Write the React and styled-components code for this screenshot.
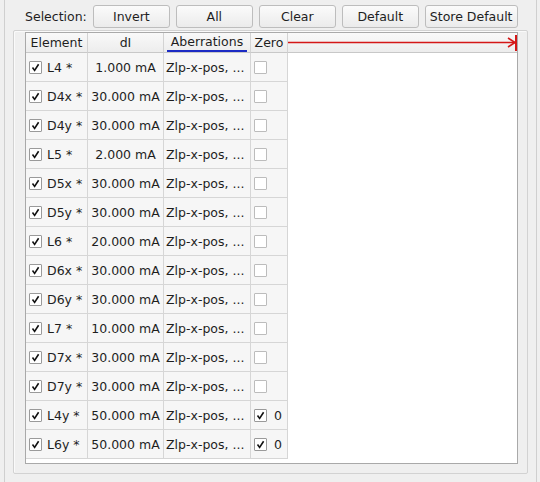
import styled, { createGlobalStyle } from "styled-components";

const GlobalStyle = createGlobalStyle`
  html, body {
    margin: 0;
    padding: 0;
    background: #efefef;
  }
  body {
    font-family: "DejaVu Sans", "Liberation Sans", sans-serif;
    font-size: 12.5px;
    color: #1e1e1e;
  }
`;

const Panel = styled.div`
  box-sizing: border-box;
  margin-left: 4px;
  width: 533px;
  height: 482px;
  border-left: 1px solid #cfcfcf;
  border-right: 1px solid #cfcfcf;
  overflow: hidden;
`;

const Toolbar = styled.div`
  display: flex;
  align-items: center;
  gap: 6px;
  padding: 5px 0 0 20px;
  height: 23px;
`;

const Label = styled.span`
  white-space: nowrap;
`;

const Button = styled.button`
  box-sizing: border-box;
  height: 23px;
  min-width: 77px;
  padding: 0 4px;
  border: 1px solid #bdbdbd;
  border-radius: 3px;
  background: linear-gradient(#fbfbfb, #ebebeb);
  font: inherit;
  color: #1e1e1e;
  white-space: nowrap;
`;

const Frame = styled.div`
  box-sizing: border-box;
  margin: 2px 0 0 8px;
  width: 515px;
  height: 444px;
  padding: 1px 9px 0 11px;
  border: 1px solid #d2d2d2;
  border-radius: 2px;
  box-shadow: inset 1px 1px 0 #fafafa;
`;

const TableView = styled.div`
  box-sizing: border-box;
  width: 493px;
  height: 432px;
  border: 1px solid #a9a9a9;
  background: #ffffff;
  overflow: hidden;
`;

const HeaderRow = styled.div`
  display: flex;
  height: 20px;
  background: linear-gradient(#f9f9f9, #ececec);
`;

const HeaderCell = styled.div`
  box-sizing: border-box;
  width: ${(p) => p.$w}px;
  flex: none;
  display: flex;
  flex-direction: column;
  border-right: 1px solid #d3d3d3;
  border-bottom: 1px solid #c8c8c8;
`;

const HeaderText = styled.span`
  flex: 1;
  display: flex;
  align-items: center;
  justify-content: center;
  white-space: nowrap;
`;

const SortBar = styled.span`
  align-self: center;
  width: calc(100% - 6px);
  height: 2px;
  background: #1b2bc4;
`;

const HeaderFiller = styled.div`
  flex: 1;
  display: flex;
  align-items: center;
  border-bottom: 1px solid #c8c8c8;
`;

const Row = styled.div`
  display: flex;
  height: 29px;
`;

const Cell = styled.div`
  box-sizing: border-box;
  width: ${(p) => p.$w}px;
  flex: none;
  display: flex;
  align-items: center;
  justify-content: ${(p) => p.$align || "flex-start"};
  gap: 5px;
  padding-left: ${(p) => p.$pad ?? 2}px;
  background: #f6f6f6;
  border-right: 1px solid #d6d6d6;
  border-bottom: 1px solid #d6d6d6;
  white-space: nowrap;
  overflow: hidden;
`;

const Box = styled.span`
  box-sizing: border-box;
  width: 13px;
  height: 13px;
  flex: none;
  display: flex;
  align-items: center;
  justify-content: center;
  background: #ffffff;
  border: 1px solid ${(p) => (p.$on ? "#9a9a9a" : "#bcbcbc")};
  border-radius: 1px;
`;

const COLS = [62, 76, 87, 37];

const ROWS = [
  ["L4 *", "1.000 mA"],
  ["D4x *", "30.000 mA"],
  ["D4y *", "30.000 mA"],
  ["L5 *", "2.000 mA"],
  ["D5x *", "30.000 mA"],
  ["D5y *", "30.000 mA"],
  ["L6 *", "20.000 mA"],
  ["D6x *", "30.000 mA"],
  ["D6y *", "30.000 mA"],
  ["L7 *", "10.000 mA"],
  ["D7x *", "30.000 mA"],
  ["D7y *", "30.000 mA"],
  ["L4y *", "50.000 mA", true],
  ["L6y *", "50.000 mA", true],
];

const Check = ({ on }) => (
  <Box $on={on}>
    {on && (
      <svg width="9" height="9" viewBox="0 0 9 9">
        <path d="M1.5 4.6 L3.6 7.4 L7.6 1.2" fill="none" stroke="#111" strokeWidth="1.6" />
      </svg>
    )}
  </Box>
);

const Arrow = () => (
  <svg width="230" height="19" viewBox="0 0 230 19">
    <line x1="0" y1="9.5" x2="227" y2="9.5" stroke="#d41717" strokeWidth="1.4" />
    <path d="M220 5 L227 9.5 L220 14" fill="none" stroke="#d41717" strokeWidth="1.6" />
    <line x1="228" y1="2" x2="228" y2="18" stroke="#d41717" strokeWidth="2" />
  </svg>
);

const App = () => {
  return (
    <>
      <GlobalStyle />
      <Panel>
        <Toolbar>
          <Label>Selection:</Label>
          <Button>Invert</Button>
          <Button>All</Button>
          <Button>Clear</Button>
          <Button>Default</Button>
          <Button>Store Default</Button>
        </Toolbar>
        <Frame>
          <TableView>
            <HeaderRow>
              <HeaderCell $w={COLS[0]}>
                <HeaderText>Element</HeaderText>
              </HeaderCell>
              <HeaderCell $w={COLS[1]}>
                <HeaderText>dI</HeaderText>
              </HeaderCell>
              <HeaderCell $w={COLS[2]}>
                <HeaderText>Aberrations</HeaderText>
                <SortBar />
              </HeaderCell>
              <HeaderCell $w={COLS[3]}>
                <HeaderText>Zero</HeaderText>
              </HeaderCell>
              <HeaderFiller>
                <Arrow />
              </HeaderFiller>
            </HeaderRow>
            {ROWS.map(([name, current, zero]) => (
              <Row key={name}>
                <Cell $w={COLS[0]} $pad={3}>
                  <Check on />
                  <span>{name}</span>
                </Cell>
                <Cell $w={COLS[1]} $pad={0} $align="center">
                  {current}
                </Cell>
                <Cell $w={COLS[2]}>Zlp-x-pos, ...</Cell>
                <Cell $w={COLS[3]} $pad={3} style={{ gap: 7 }}>
                  <Check on={zero} />
                  {zero && <span>0</span>}
                </Cell>
              </Row>
            ))}
          </TableView>
        </Frame>
      </Panel>
    </>
  );
};

export default App;
